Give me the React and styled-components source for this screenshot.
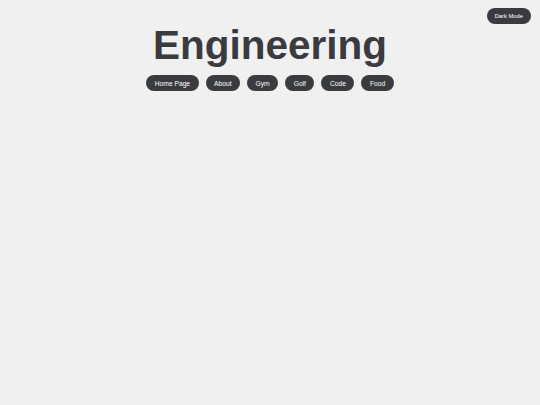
import styled, { createGlobalStyle } from "styled-components";

const GlobalStyle = createGlobalStyle`
    body {
        margin: 0;
        background: #f0f0f0;
        font-family: "Liberation Sans", Arial, sans-serif;
    }
`;

const Page = styled.div`
    position: relative;
    min-height: 405px;
    display: flex;
    flex-direction: column;
    align-items: center;
`;

const ThemeToggle = styled.button`
    position: absolute;
    top: 8px;
    right: 9px;
    height: 16px;
    padding: 0 8px;
    border: none;
    border-radius: 8px;
    background: #3a3b3f;
    color: #ffffff;
    font-family: inherit;
    font-size: 5.8px;
`;

const Title = styled.h1`
    margin: 22px 0 0;
    font-size: 40.5px;
    line-height: 46px;
    font-weight: bold;
    color: #3a3b3f;
`;

const Nav = styled.nav`
    display: flex;
    gap: 7px;
    margin-top: 7px;
`;

const NavButton = styled.button`
    height: 16px;
    padding: 0 8.5px;
    border: none;
    border-radius: 8px;
    background: #3a3b3f;
    color: #ffffff;
    font-family: inherit;
    font-size: 6.7px;
`;

const links = ["Home Page", "About", "Gym", "Golf", "Code", "Food"];

const App = () => {
    return (
        <Page>
            <GlobalStyle />
            <ThemeToggle>Dark Mode</ThemeToggle>
            <Title>Engineering</Title>
            <Nav>
                {links.map((link) => (
                    <NavButton key={link}>{link}</NavButton>
                ))}
            </Nav>
        </Page>
    );
};

export default App;
